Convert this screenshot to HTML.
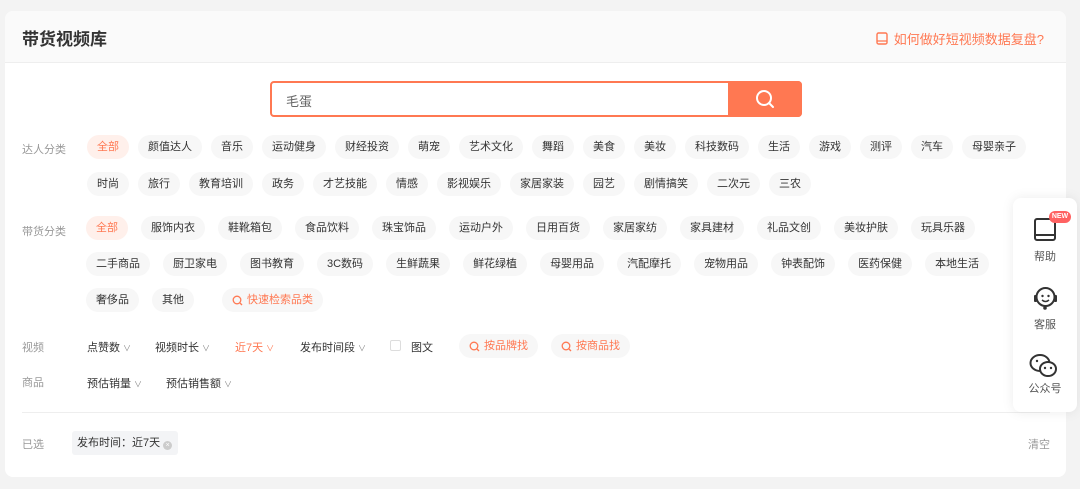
<!DOCTYPE html>
<html><head><meta charset="utf-8"><style>
*{margin:0;padding:0;box-sizing:border-box}
body{width:1080px;height:489px;background:#f3f3f3;font-family:"Liberation Sans","Noto Sans CJK SC",sans-serif;position:relative;overflow:hidden;color:#333}
.card{position:absolute;left:5px;top:11px;width:1061px;height:466px;background:#fff;border-radius:8px;overflow:hidden}
.hd{height:52px;background:#fafafa;border-bottom:1px solid #eee;position:relative}
.hd h1{position:absolute;left:17px;top:14px;font-size:17px;font-weight:bold;color:#333}
.hd .lk{position:absolute;right:22px;top:18px;font-size:13px;color:#ff7852;display:flex;align-items:center;gap:6px}
.abs{position:absolute}
.lbl{position:absolute;font-size:11px;color:#999;left:22px}
.row{position:absolute;display:flex;font-size:11px}
.row span{height:24px;line-height:24px;border-radius:12px;background:#f7f7f7;color:#333;white-space:nowrap}
.r1 span{padding:0 10px;margin-right:9px}
.r2 span{padding:0 10px;margin-right:13px}
.row span.on{background:#fff0eb;color:#ff7852}
.dd{position:absolute;font-size:11px;color:#333}
.dd i{font-style:normal;font-size:8px;color:#888;margin-left:3px}
.pill{position:absolute;height:24px;line-height:24px;border-radius:12px;background:#f7f7f7;color:#ff7852;font-size:11px;display:flex;align-items:center;gap:4px;padding:0 10px}
.side{position:absolute;left:1013px;top:198px;width:64px;height:214px;background:#fff;border-radius:8px;box-shadow:0 0 12px rgba(0,0,0,.08)}
.side div{position:absolute;width:64px;text-align:center;font-size:11px;color:#555}
</style></head><body>
<div class="card">
 <div class="hd"><h1>带货视频库</h1>
  <div class="lk"><svg width="12" height="13" viewBox="0 0 12 13"><rect x="1" y="1" width="10" height="11" rx="1.5" fill="none" stroke="#ff7852" stroke-width="1.4"/><line x1="1" y1="9" x2="11" y2="9" stroke="#ff7852" stroke-width="1.2"/></svg>如何做好短视频数据复盘?</div>
 </div>
 <div class="abs" style="left:265px;top:70px;width:532px;height:36px;border:2px solid #ff7852;border-radius:4px;background:#fff">
  <div class="abs" style="left:14px;top:8px;font-size:13px;color:#666">毛蛋</div>
  <div class="abs" style="right:-2px;top:-2px;width:74px;height:36px;background:#ff7852;border-radius:0 4px 4px 0;display:flex;align-items:center;justify-content:center">
   <svg width="20" height="20" viewBox="0 0 20 20"><circle cx="9" cy="9" r="7" fill="none" stroke="#fff" stroke-width="2"/><line x1="14" y1="14" x2="18" y2="18" stroke="#fff" stroke-width="2" stroke-linecap="round"/></svg></div>
 </div>
</div>
<div class="lbl" style="top:141px">达人分类</div>
<div class="row r1" style="left:87px;top:135px"><span class="on">全部</span><span>颜值达人</span><span>音乐</span><span>运动健身</span><span>财经投资</span><span>萌宠</span><span>艺术文化</span><span>舞蹈</span><span>美食</span><span>美妆</span><span>科技数码</span><span>生活</span><span>游戏</span><span>测评</span><span>汽车</span><span>母婴亲子</span></div>
<div class="row r1" style="left:87px;top:172px"><span>时尚</span><span>旅行</span><span>教育培训</span><span>政务</span><span>才艺技能</span><span>情感</span><span>影视娱乐</span><span>家居家装</span><span>园艺</span><span>剧情搞笑</span><span>二次元</span><span>三农</span></div>
<div class="lbl" style="top:223px">带货分类</div>
<div class="row r2" style="left:86px;top:216px"><span class="on">全部</span><span>服饰内衣</span><span>鞋靴箱包</span><span>食品饮料</span><span>珠宝饰品</span><span>运动户外</span><span>日用百货</span><span>家居家纺</span><span>家具建材</span><span>礼品文创</span><span>美妆护肤</span><span>玩具乐器</span></div>
<div class="row r2" style="left:86px;top:252px"><span>二手商品</span><span>厨卫家电</span><span>图书教育</span><span>3C数码</span><span>生鲜蔬果</span><span>鲜花绿植</span><span>母婴用品</span><span>汽配摩托</span><span>宠物用品</span><span>钟表配饰</span><span>医药保健</span><span>本地生活</span></div>
<div class="row r2" style="left:86px;top:288px"><span>奢侈品</span><span>其他</span></div>
<div class="pill" style="left:222px;top:288px"><svg width="11" height="11" viewBox="0 0 11 11"><circle cx="5" cy="5" r="3.8" fill="none" stroke="#ff7852" stroke-width="1.3"/><line x1="8" y1="8" x2="10" y2="10" stroke="#ff7852" stroke-width="1.3"/></svg>快速检索品类</div>
<div class="lbl" style="top:339px">视频</div>
<div class="dd" style="left:87px;top:339px">点赞数<i>∨</i></div>
<div class="dd" style="left:155px;top:339px">视频时长<i>∨</i></div>
<div class="dd" style="left:235px;top:339px;color:#ff7852">近7天<i style="color:#ff7852">∨</i></div>
<div class="dd" style="left:300px;top:339px">发布时间段<i>∨</i></div>
<div class="abs" style="left:390px;top:340px;width:11px;height:11px;border:1px solid #ddd;border-radius:2px"></div>
<div class="dd" style="left:411px;top:339px">图文</div>
<div class="pill" style="left:459px;top:334px">
<svg width="11" height="11" viewBox="0 0 11 11"><circle cx="5" cy="5" r="3.8" fill="none" stroke="#ff7852" stroke-width="1.3"/><line x1="8" y1="8" x2="10" y2="10" stroke="#ff7852" stroke-width="1.3"/></svg>按品牌找</div>
<div class="pill" style="left:551px;top:334px">
<svg width="11" height="11" viewBox="0 0 11 11"><circle cx="5" cy="5" r="3.8" fill="none" stroke="#ff7852" stroke-width="1.3"/><line x1="8" y1="8" x2="10" y2="10" stroke="#ff7852" stroke-width="1.3"/></svg>按商品找</div>
<div class="lbl" style="top:374px">商品</div>
<div class="dd" style="left:87px;top:375px">预估销量<i>∨</i></div>
<div class="dd" style="left:166px;top:375px">预估销售额<i>∨</i></div>
<div class="abs" style="left:22px;top:412px;width:1028px;height:1px;background:#eee"></div>
<div class="lbl" style="top:436px">已选</div>
<div class="abs" style="left:72px;top:431px;width:106px;height:24px;background:#f3f4f6;border-radius:3px;font-size:11px;color:#333;line-height:24px;padding-left:5px">发布时间：近7天 <span style="display:inline-block;width:9px;height:9px;border-radius:50%;background:#ccc;color:#fff;font-size:7px;line-height:9px;text-align:center;vertical-align:-1px">×</span></div>
<div class="abs" style="left:1028px;top:436px;font-size:11px;color:#999">清空</div>
<div class="side">
 <svg class="abs" style="left:20px;top:18px" width="24" height="26" viewBox="0 0 24 26"><rect x="2" y="3" width="20" height="21" rx="2" fill="none" stroke="#333" stroke-width="2"/><line x1="2" y1="19" x2="22" y2="19" stroke="#333" stroke-width="2"/></svg>
 <div style="left:36px;top:13px;width:22px;height:12px;background:#ff6262;border-radius:6px;color:#fff;font-size:7px;line-height:12px;font-weight:bold">NEW</div>
 <div style="top:50px">帮助</div>
 <svg class="abs" style="left:19px;top:87px" width="27" height="27" viewBox="0 0 27 27"><circle cx="13.5" cy="12" r="9" fill="none" stroke="#333" stroke-width="2"/><rect x="2" y="10" width="3" height="7" rx="1" fill="#333"/><rect x="22" y="10" width="3" height="7" rx="1" fill="#333"/><circle cx="10.5" cy="11" r="1.2" fill="#333"/><circle cx="16.5" cy="11" r="1.2" fill="#333"/><path d="M10 15 Q13.5 18 17 15" fill="none" stroke="#333" stroke-width="1.5"/><circle cx="13" cy="23" r="1.8" fill="#333"/></svg>
 <div style="top:118px">客服</div>
 <svg class="abs" style="left:16px;top:155px" width="30" height="26" viewBox="0 0 30 26"><ellipse cx="11" cy="10" rx="9.5" ry="8" fill="#fff" stroke="#333" stroke-width="2"/><ellipse cx="19" cy="16" rx="8" ry="7" fill="#fff" stroke="#333" stroke-width="2"/><circle cx="8" cy="8" r="1.2" fill="#333"/><circle cx="16" cy="15" r="1.2" fill="#333"/><circle cx="22" cy="15" r="1.2" fill="#333"/></svg>
 <div style="top:182px">公众号</div>
</div>
</body></html>
